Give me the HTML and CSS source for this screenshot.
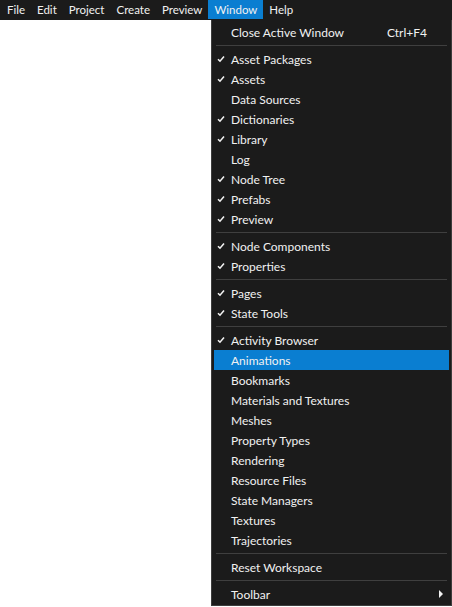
FILE: index.html
```html
<!DOCTYPE html>
<html>
<head>
<meta charset="utf-8">
<link rel="stylesheet" href="styles.css">
</head>
<body>
<div class="menubar">
  <span class="top-item">File</span>
  <span class="top-item">Edit</span>
  <span class="top-item">Project</span>
  <span class="top-item">Create</span>
  <span class="top-item">Preview</span>
  <span class="top-item active">Window</span>
  <span class="top-item">Help</span>
</div>
<div class="dropdown">
  <div class="item"><span class="check"></span><span class="label">Close Active Window</span><span class="shortcut">Ctrl+F4</span></div>
  <div class="sep"></div>
  <div class="item"><span class="check on"><svg viewBox="0 0 8 8"><path d="M1 4.2 L3 6.2 L7 1.6"/></svg></span><span class="label">Asset Packages</span></div>
  <div class="item"><span class="check on"><svg viewBox="0 0 8 8"><path d="M1 4.2 L3 6.2 L7 1.6"/></svg></span><span class="label">Assets</span></div>
  <div class="item"><span class="check"></span><span class="label">Data Sources</span></div>
  <div class="item"><span class="check on"><svg viewBox="0 0 8 8"><path d="M1 4.2 L3 6.2 L7 1.6"/></svg></span><span class="label">Dictionaries</span></div>
  <div class="item"><span class="check on"><svg viewBox="0 0 8 8"><path d="M1 4.2 L3 6.2 L7 1.6"/></svg></span><span class="label">Library</span></div>
  <div class="item"><span class="check"></span><span class="label">Log</span></div>
  <div class="item"><span class="check on"><svg viewBox="0 0 8 8"><path d="M1 4.2 L3 6.2 L7 1.6"/></svg></span><span class="label">Node Tree</span></div>
  <div class="item"><span class="check on"><svg viewBox="0 0 8 8"><path d="M1 4.2 L3 6.2 L7 1.6"/></svg></span><span class="label">Prefabs</span></div>
  <div class="item"><span class="check on"><svg viewBox="0 0 8 8"><path d="M1 4.2 L3 6.2 L7 1.6"/></svg></span><span class="label">Preview</span></div>
  <div class="sep"></div>
  <div class="item"><span class="check on"><svg viewBox="0 0 8 8"><path d="M1 4.2 L3 6.2 L7 1.6"/></svg></span><span class="label">Node Components</span></div>
  <div class="item"><span class="check on"><svg viewBox="0 0 8 8"><path d="M1 4.2 L3 6.2 L7 1.6"/></svg></span><span class="label">Properties</span></div>
  <div class="sep"></div>
  <div class="item"><span class="check on"><svg viewBox="0 0 8 8"><path d="M1 4.2 L3 6.2 L7 1.6"/></svg></span><span class="label">Pages</span></div>
  <div class="item"><span class="check on"><svg viewBox="0 0 8 8"><path d="M1 4.2 L3 6.2 L7 1.6"/></svg></span><span class="label">State Tools</span></div>
  <div class="sep"></div>
  <div class="item"><span class="check on"><svg viewBox="0 0 8 8"><path d="M1 4.2 L3 6.2 L7 1.6"/></svg></span><span class="label">Activity Browser</span></div>
  <div class="item hl"><span class="check"></span><span class="label">Animations</span></div>
  <div class="item"><span class="check"></span><span class="label">Bookmarks</span></div>
  <div class="item"><span class="check"></span><span class="label">Materials and Textures</span></div>
  <div class="item"><span class="check"></span><span class="label">Meshes</span></div>
  <div class="item"><span class="check"></span><span class="label">Property Types</span></div>
  <div class="item"><span class="check"></span><span class="label">Rendering</span></div>
  <div class="item"><span class="check"></span><span class="label">Resource Files</span></div>
  <div class="item"><span class="check"></span><span class="label">State Managers</span></div>
  <div class="item"><span class="check"></span><span class="label">Textures</span></div>
  <div class="item"><span class="check"></span><span class="label">Trajectories</span></div>
  <div class="sep"></div>
  <div class="item"><span class="check"></span><span class="label">Reset Workspace</span></div>
  <div class="sep"></div>
  <div class="item"><span class="check"></span><span class="label">Toolbar</span><span class="arrow"></span></div>
</div>
</body>
</html>
```
FILE: styles.css
```css
html, body {
  margin: 0;
  padding: 0;
  background: #ffffff;
  width: 452px;
  height: 607px;
  overflow: hidden;
  font-family: Lato, "Noto Sans", sans-serif;
  font-size: 12px;
  color: #f1f1f1;
}

.menubar {
  display: flex;
  height: 20px;
  background: #1b1b1b;
  padding-left: 1px;
  font-size: 11.5px;
}

.top-item {
  display: flex;
  align-items: center;
  height: 19px;
  padding: 0 6px;
  line-height: 19px;
}

.top-item.active {
  background: #0a7ed1;
}

.dropdown {
  position: absolute;
  top: 20px;
  left: 211px;
  width: 241px;
  box-sizing: border-box;
  background: #1b1b1b;
  border: 1px solid #3d3d3d;
  border-top: none;
  padding: 2px 2px 1px 2px;
}

.item {
  display: flex;
  align-items: center;
  height: 20px;
  position: relative;
}

.item.hl {
  background: #0a7ed1;
}

.check {
  width: 14px;
  padding-left: 3px;
  display: flex;
  align-items: center;
}

.check svg {
  width: 8px;
  height: 8px;
  fill: none;
  stroke: #f1f1f1;
  stroke-width: 1.6;
}

.label {
  flex: 1;
}

.shortcut {
  padding-right: 22px;
}

.arrow {
  width: 0;
  height: 0;
  border-top: 4px solid transparent;
  border-bottom: 4px solid transparent;
  border-left: 4px solid #f1f1f1;
  margin-right: 6px;
}

.sep {
  height: 1px;
  background: #3f3f3f;
  margin: 3px 2px 3px 2px;
}
```
